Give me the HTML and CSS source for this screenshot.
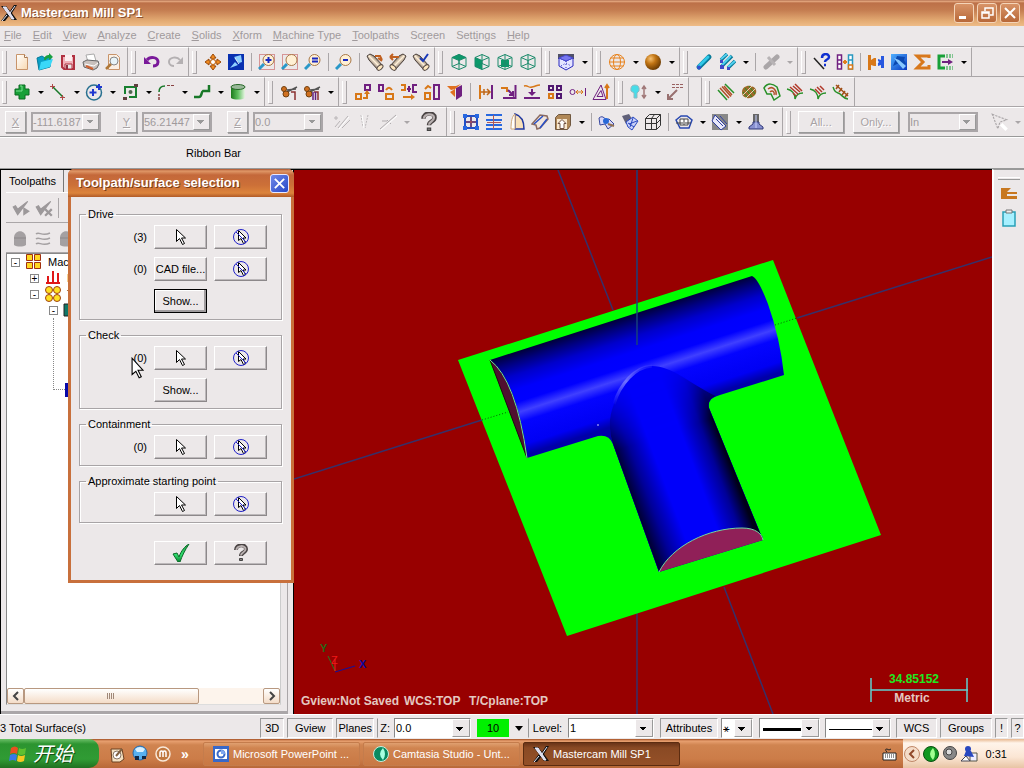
FILE: index.html
```html
<!DOCTYPE html>
<html lang="en">
<head>
    <meta charset="UTF-8">
    <meta name="viewport" content="width=device-width, initial-scale=1.0">
    <title>Mastercam Mill SP1</title>
    <link rel="stylesheet" href="styles.css">
</head>
<body>
    <!-- Icon set -->
    <svg class="sprite" aria-hidden="true">
        <defs>
            <linearGradient id="gCyl"><stop offset="0" stop-color="#1c7a1c"/><stop offset=".5" stop-color="#5fc05f"/><stop offset="1" stop-color="#e8f4e4"/></linearGradient>
            <radialGradient id="gBall" cx=".35" cy=".3" r=".8"><stop offset="0" stop-color="#f6c070"/><stop offset=".4" stop-color="#c07414"/><stop offset="1" stop-color="#5a3000"/></radialGradient>
            <linearGradient id="gCheck" x2="0" y2="1"><stop offset="0" stop-color="#2a9a4a"/><stop offset=".6" stop-color="#30e070"/><stop offset="1" stop-color="#0a8030"/></linearGradient>
            <linearGradient id="gTube" x1="0" y1="1" x2="1" y2="0"><stop offset=".3" stop-color="#6a5a50"/><stop offset=".5" stop-color="#fff0d8"/><stop offset=".7" stop-color="#6a5a4a"/></linearGradient>
            <linearGradient id="gSheet" x2="1" y2="1"><stop offset="0" stop-color="#fff"/><stop offset="1" stop-color="#f8d8b0"/></linearGradient>
            <linearGradient id="gBlue" x2="1" y2="1"><stop offset="0" stop-color="#50b0ff"/><stop offset="1" stop-color="#0838c0"/></linearGradient>
        </defs>
        <symbol id="logo" viewBox="0 0 18 18"><path d="M1 2h5l4 5 4-6h3l-5 8 5 7h-5l-3-4-4 5H1l6-8z" fill="#111"/><path d="M3 3h3l8 12h-2zM15 2l-5 7M7 11l-5 6" stroke="#eef" fill="#dde"/></symbol>
        <symbol id="new" viewBox="0 0 18 18"><path d="M3.500 1.500h8l3 3v12h-11z" fill="url(#gSheet)" stroke="#c8946a"/><path d="M11.500 1.500v3h3" fill="#fff" stroke="#a87850"/></symbol>
        <symbol id="open" viewBox="0 0 18 18"><path d="M1 5l5-2 3 2 6-1-1 10-11 3z" fill="#0aa0c8" stroke="#067a98"/><path d="M5 9l12-3-3 8-11 3z" fill="#3ad8f8"/><path d="M8 7c0-4 3-5 5-5V0l4 4-4 3V5c-2 0-3 1-3 2z" fill="#18a040"/></symbol>
        <symbol id="save" viewBox="0 0 18 18"><path d="M3 3h12v13H5l-2-2z" fill="#f0b0b8" stroke="#b03040" stroke-width="2"/><path d="M6 2h7v6H6z" fill="#fbeff0"/><path d="M6 11h7v5H6z" fill="#e8e8e8" stroke="#b03040"/><path d="M7 12h2v4H7z" fill="#903040"/></symbol>
        <symbol id="print" viewBox="0 0 18 18"><path d="M4 2l8-1 2 7-8 1z" fill="#fff" stroke="#aaa"/><path d="M1 9l4-2 11 1 1 3-2 4-4 2-9-3z" fill="#c8c0bc" stroke="#666"/><path d="M3 11l9 2 4-3" fill="none" stroke="#fff"/><path d="M4 13l7 3" stroke="#d06030" stroke-width="2"/></symbol>
        <symbol id="preview" viewBox="0 0 18 18"><path d="M3.500 1.500h8l3 3v12h-11z" fill="#fbf0e4" stroke="#c8946a"/><circle cx="9" cy="8" r="4" fill="#e8f4f8" stroke="#888"/><path d="M6 11l-5 5" stroke="#b07838" stroke-width="2.500"/></symbol>
        <symbol id="undo" viewBox="0 0 18 18"><path d="M4 7c3-4 11-3 11 2 0 3-3 4-5 4" fill="none" stroke="#7a1a9a" stroke-width="3"/><path d="M1 4v7h7z" fill="#7a1a9a"/></symbol>
        <symbol id="redo" viewBox="0 0 18 18"><path d="M14 7C11 3 3 4 3 9c0 3 3 4 5 4" fill="none" stroke="#b4b0b2" stroke-width="2"/><path d="M17 4v7h-7z" fill="#b4b0b2"/></symbol>
        <symbol id="fit" viewBox="0 0 18 18"><path d="M9 1l3 4h-2v3h3V6l4 3-4 3v-2h-3v3h2l-3 4-3-4h2v-3H5v2L1 9l4-3v2h3V5H6z" fill="#f08a20" stroke="#9a4a08"/><circle cx="9" cy="9" r="2.500" fill="#fff" stroke="#c86810"/></symbol>
        <symbol id="repaint" viewBox="0 0 18 18"><path d="M1 1h16v16H1z" fill="#0830b0"/><path d="M7 4l7-2 1 7-3 1zM3 15l5-6 3 3z" fill="#8cd0ff"/><path d="M8 5l4 6" stroke="#e8f8ff"/></symbol>
        <symbol id="glass" viewBox="0 0 18 18"><path d="M6 11l-5 5" stroke="#2a98c8" stroke-width="3"/><circle cx="10.500" cy="7" r="5.500" fill="#fff0d4" stroke="#a87848"/></symbol>
        <symbol id="zoomwin" viewBox="0 0 18 18"><path d="M1.500 1.500h15v15h-15z" fill="none" stroke="#c04040" stroke-dasharray="1 1"/><use href="#glass"/><path d="M10.500 4v6M7.500 7h6" stroke="#1828c0" stroke-width="2"/></symbol>
        <symbol id="zoomtgt" viewBox="0 0 18 18"><path d="M1.500 1.500h15v15h-15z" fill="none" stroke="#c04040" stroke-dasharray="1 1"/><use href="#glass"/></symbol>
        <symbol id="zoomeq" viewBox="0 0 18 18"><use href="#glass"/><path d="M8 5.500h6M8 8.500h6" stroke="#1828c0" stroke-width="2"/></symbol>
        <symbol id="zoomout" viewBox="0 0 18 18"><use href="#glass"/><path d="M8 7h5" stroke="#1828c0" stroke-width="2"/></symbol>
        <symbol id="tube" viewBox="0 0 18 18"><path d="M1 3l3-2 4 2 9 10-5 4L3 7z" fill="url(#gTube)" stroke="#4a403a"/><ellipse cx="14" cy="14.500" rx="2" ry="3.500" transform="rotate(50 14 14.500)" fill="#ffe8c0" stroke="#554a44"/></symbol>
        <symbol id="view1" viewBox="0 0 18 18"><use href="#tube"/><path d="M9 3h5l2 4M12 5l4 3" stroke="#c06020" stroke-width="2" fill="none"/></symbol>
        <symbol id="view2" viewBox="0 0 18 18"><use href="#tube" transform="matrix(-1 0 0 1 18 0)"/><path d="M1 4h9M1 4l3-3M1 4l3 3" stroke="#c06020" stroke-width="2" fill="none"/></symbol>
        <symbol id="view3" viewBox="0 0 18 18"><use href="#tube"/><path d="M8 5l3 3 5-7" stroke="#1838b8" stroke-width="2" fill="none"/></symbol>
        <symbol id="cube" viewBox="0 0 18 18"><path d="M9 1.500l7 3v9l-7 3-7-3v-9zM2 4.500l7 3 7-3M9 7.500v9M9 1.500v9M2 13.500l7-3 7 3" fill="none" stroke="#1a8a6a"/></symbol>
        <symbol id="cubetop" viewBox="0 0 18 18"><path d="M9 1l7 3.500-7 3-7-3z" fill="#0a9a6a"/><use href="#cube"/></symbol>
        <symbol id="cubefront" viewBox="0 0 18 18"><path d="M2 4.500l7 3v9l-7-3z" fill="#0a9a6a"/><use href="#cube"/></symbol>
        <symbol id="cuberight" viewBox="0 0 18 18"><path d="M5 7h8v7H5z" fill="#0a9a6a"/><use href="#cube"/></symbol>
        <symbol id="gview" viewBox="0 0 18 18"><path d="M1 1h16v5H1z" fill="#505068"/><path d="M2 5l7 3 7-3v8l-7 4-7-4z" fill="#e4e4ff" stroke="#2828c0"/><path d="M9 2l7 3-7 3-7-3z" fill="#7878f0" stroke="#4848d0"/><path d="M9 8v9M4 13l5-3 5 3" stroke="#2828c0" stroke-dasharray="1 2" fill="none"/></symbol>
        <symbol id="globe" viewBox="0 0 18 18"><g fill="none" stroke="#e8821c"><circle cx="9" cy="9" r="7.500"/><ellipse cx="9" cy="9" rx="3.500" ry="7.500"/><path d="M1 9h16M2.500 5h13M2.500 13h13"/></g></symbol>
        <symbol id="ball" viewBox="0 0 18 18"><circle cx="9" cy="9" r="8" fill="url(#gBall)"/></symbol>
        <symbol id="rod" viewBox="0 0 18 18"><path d="M4 14L14 4" stroke="#087a98" stroke-width="5" stroke-linecap="round"/><path d="M4 13L13 4" stroke="#30c8e8" stroke-width="3" stroke-linecap="round"/><circle cx="4" cy="14.500" r="2" fill="#3050d0"/></symbol>
        <symbol id="rods" viewBox="0 0 18 18"><path d="M3 7l6-6M4 13L14 3M10 15l7-7" stroke="#087a98" stroke-width="3.500"/><path d="M3 6l6-5M4 12L13 3M10 14l7-6" stroke="#50d0f0" stroke-width="2"/><path d="M2 7h3v3H2zM2 12h4v4H2zM9 14h3v3H9z" fill="#4048c8"/></symbol>
        <symbol id="rodoff" viewBox="0 0 18 18"><path d="M4 14L15 4" stroke="#aaa6a8" stroke-width="5" stroke-linecap="round"/><path d="M6 4l7 8" stroke="#b8b4b6" stroke-width="3"/></symbol>
        <symbol id="whatline" viewBox="0 0 18 18"><path d="M1 5l10 11" stroke="#222" stroke-width="1.500"/><path d="M9 5c0-5 7-5 7-1 0 3-4 2-4 5M11 12h2" stroke="#1030d0" stroke-width="2.500" fill="none"/></symbol>
        <symbol id="compare" viewBox="0 0 18 18"><path d="M1.500 2h4v14h-4zM1 7h5M1 11h5" fill="#fff" stroke="#702080" stroke-width="1.500"/><path d="M12.500 2h4v14h-4zM12 7h5" fill="#fff" stroke="#2898c0" stroke-width="1.500"/><path d="M12.500 12h4v4h-4z" fill="#fff" stroke="#d87818" stroke-width="1.500"/><path d="M7 9h4M9 7v4" stroke="#e08020" stroke-width="2"/></symbol>
        <symbol id="links" viewBox="0 0 18 18"><path d="M1 2h3v5l3-2h2v8H7l-3-1v5H1z" fill="#d87818"/><path d="M17 3h-3v4l-3-1v7l3-1v3h3z" fill="#2858e0"/><path d="M9 9h3" stroke="#fff"/></symbol>
        <symbol id="bluetool" viewBox="0 0 18 18"><path d="M1 1h16v16H1z" fill="url(#gBlue)"/><path d="M7 3l8 1-1 3 2 4-4 1-3-2-6 3z" fill="#0a48b0"/><path d="M4 5l5 2 7 6-3 3-6-7z" fill="#88c8ff"/></symbol>
        <symbol id="sigma" viewBox="0 0 18 18"><path d="M16 5V3H4l6 6-6 6h12v-3" fill="none" stroke="#d8781c" stroke-width="3"/></symbol>
        <symbol id="exit" viewBox="0 0 18 18"><path d="M9 3H3v12h6" fill="none" stroke="#18a038" stroke-width="3"/><path d="M6 8h6V6l5 3-5 3v-2H6z" fill="#702080"/><path d="M10 2h7M10 4h7M10 14h7M10 16h7" stroke="#18a038" stroke-dasharray="2 1"/></symbol>
        <symbol id="plus" viewBox="0 0 18 18"><path d="M6 2h6v4h4v6h-4v4H6v-4H2V6h4z" fill="#18a038" stroke="#0a6a20"/><path d="M7 3h2v5H3" stroke="#7ae090" fill="none"/></symbol>
        <symbol id="line" viewBox="0 0 18 18"><path d="M4 4l10 10" stroke="#187828" stroke-width="1.500"/><path d="M1 3.500h5M3.500 1v5M11 14.500h5M13.500 12v5" stroke="#b04848"/></symbol>
        <symbol id="arc" viewBox="0 0 18 18"><circle cx="9" cy="9.500" r="7.500" fill="none" stroke="#287090" stroke-width="1.500"/><path d="M8 6v7M4.500 9.500h7M14 1v6M11 4h6" stroke="#2038d0" stroke-width="2"/></symbol>
        <symbol id="rect" viewBox="0 0 18 18"><path d="M4 11V4h11v10H8" fill="none" stroke="#188030" stroke-width="2"/><circle cx="9.500" cy="9" r="2" fill="#506850"/><path d="M2 14h4v3H2zM13 1h4v3h-4z" fill="#604040"/></symbol>
        <symbol id="fillet" viewBox="0 0 18 18"><path d="M2 17v-6" stroke="#884040" stroke-width="1.500" stroke-dasharray="3 1"/><path d="M2 9c0-4 2-6 6-6" stroke="#187828" stroke-width="1.500" fill="none"/><path d="M10 2.500h7" stroke="#884040" stroke-dasharray="3 1"/></symbol>
        <symbol id="spline" viewBox="0 0 18 18"><path d="M1 14h5c3 0 2-5 4-6h6V2" fill="none" stroke="#187828" stroke-width="2.500"/></symbol>
        <symbol id="cyl" viewBox="0 0 18 18"><path d="M2 4v11c3 2 11 2 14 0V4z" fill="url(#gCyl)"/><ellipse cx="9" cy="4" rx="7" ry="2.500" fill="#98b898" stroke="#286828"/></symbol>
        <symbol id="trim" viewBox="0 0 18 18"><path d="M7 9l10-5M7 7l9-1" stroke="#555" stroke-width="1.500"/><circle cx="4" cy="6" r="2.500" fill="#d07020" stroke="#704010"/><circle cx="6" cy="11" r="3" fill="#d07020" stroke="#704010"/><path d="M11 9h4v8" stroke="#8a3030" stroke-width="1.500" fill="none"/></symbol>
        <symbol id="trimmany" viewBox="0 0 18 18"><use href="#trim"/><path d="M10 9v8M12.500 9v8" stroke="#602080" stroke-width="1.500"/></symbol>
        <symbol id="xf1" viewBox="0 0 18 18"><path d="M11 2h5v5h-5z" fill="none" stroke="#702080" stroke-width="2"/><path d="M2 11h5v5H2zM9 15h4v-5" fill="none" stroke="#d87818" stroke-width="2"/><path d="M10 11l3-4 3 4z" fill="#d87818"/></symbol>
        <symbol id="xf2" viewBox="0 0 18 18"><path d="M2 2h4v6H2z" fill="none" stroke="#702080" stroke-width="2"/><path d="M9 16v-5h7v5zM9 7c2-3 4-3 6 0" fill="none" stroke="#d87818" stroke-width="2"/></symbol>
        <symbol id="xf3" viewBox="0 0 18 18"><path d="M1 2h4v5H1M3 14h9" fill="none" stroke="#d87818" stroke-width="2"/><path d="M11 11l4 3-4 3z" fill="#d87818"/><path d="M17 2h-4v7h4M7 6h4M9 3v6" fill="none" stroke="#702080" stroke-width="2"/></symbol>
        <symbol id="xf4" viewBox="0 0 18 18"><path d="M11 2h5v14h-5z" fill="none" stroke="#702080" stroke-width="2"/><path d="M2 10h5v6H2zM2 6l3-3 3 2" fill="none" stroke="#d87818" stroke-width="2"/></symbol>
        <symbol id="xf5" viewBox="0 0 18 18"><path d="M10 5l6-3v11l-6 4z" fill="#702080"/><path d="M1 3h9l5-2-6 5-4 1zM4 9l5 5V6z" fill="#e07020"/></symbol>
        <symbol id="xf6" viewBox="0 0 18 18"><path d="M3 2v14" stroke="#d87818" stroke-width="2"/><path d="M4 9h9M10 6l3 3-3 3M7 6v6" stroke="#c06818" stroke-width="1.500" fill="none"/><path d="M15 2v14" stroke="#702080" stroke-width="2"/></symbol>
        <symbol id="xf7" viewBox="0 0 18 18"><path d="M1 5h6v4" stroke="#d87818" stroke-width="2" fill="none"/><path d="M15.500 2v13H3M8 7l5 5V8M9 12h4" stroke="#702080" stroke-width="2" fill="none"/></symbol>
        <symbol id="xf8" viewBox="0 0 18 18"><path d="M1 3c5-1 3 2 8 1s4-2 8-2" stroke="#d87818" stroke-width="1.500" fill="none"/><path d="M1 15h16M9 6v5" stroke="#702080" stroke-width="2"/><path d="M5 9h8l-4 4z" fill="#702080"/></symbol>
        <symbol id="xf9" viewBox="0 0 18 18"><path d="M3 3h4v4H3zM11 3h4v4h-4zM11 11h4v4h-4z" fill="none" stroke="#501870" stroke-width="2"/><path d="M3 11h4v4H3z" fill="none" stroke="#d87818" stroke-width="2"/></symbol>
        <symbol id="xf10" viewBox="0 0 18 18"><circle cx="3.500" cy="9" r="2.500" fill="none" stroke="#702080"/><path d="M7 9h7M9 7L7 9l2 2M12 7l2 2-2 2" stroke="#d87818" fill="none"/><path d="M16.500 5v8" stroke="#702080"/></symbol>
        <symbol id="xf11" viewBox="0 0 18 18"><path d="M1 16.500L9 2l5 14.500zM5 13.500l4-6 2 6z" fill="none" stroke="#702080"/><path d="M15 3v13M13 5l2-3 2 3" stroke="#d87818" stroke-width="2" fill="none"/></symbol>
        <symbol id="dimup" viewBox="0 0 18 18"><path d="M5 2q5 0 4 6l-2 2v5H4v-5L1 8q-1-6 4-6z" fill="#48dce8" stroke="#90b8c0"/><path d="M14 4v10M12 6l2-3 2 3M12 12l2 3 2-3" stroke="#a07878" stroke-width="1.500" fill="none"/></symbol>
        <symbol id="note" viewBox="0 0 18 18"><path d="M2 16L11 7M2 11v5h5" stroke="#987070" stroke-width="2" fill="none"/><path d="M6 1.500h11M6 4.500h11" stroke="#986060" stroke-dasharray="3 1"/></symbol>
        <symbol id="tp1" viewBox="0 0 18 18"><path d="M1 7l9 10M8 1l9 9" stroke="#289028" stroke-width="1.500"/><path d="M3 5l9 10M5 3.500l9 10M7 3l8 9" stroke="#b05028" stroke-width="1.500"/></symbol>
        <symbol id="tp2" viewBox="0 0 18 18"><path d="M2 9c0-5 5-7 9-6s6 4 5 7-5 6-9 5-5-3-5-6z" fill="#9a6a28"/><path d="M3 9l4 5M5 5l7 9M9 3l6 8" stroke="#289028"/><path d="M3 12l9-9M6 15l9-9" stroke="#e8d0b8"/></symbol>
        <symbol id="tp3" viewBox="0 0 18 18"><path d="M1 5c4-6 9-4 13-1l3 9-6 4-3-6-4 0z" fill="none" stroke="#289028" stroke-width="1.500"/><path d="M5 6c5-4 9 2 8 6M7 9c3-3 5 1 4 3" fill="none" stroke="#b05028" stroke-width="1.500"/></symbol>
        <symbol id="tp4" viewBox="0 0 18 18"><path d="M1 6c5 1 8 5 8 10 1-4 4-6 8-6" fill="none" stroke="#289028" stroke-width="1.500"/><path d="M4 4l8 7M7 3l7 6M9 1l7 7M7 10l3 3" stroke="#b03828" stroke-width="1.500"/></symbol>
        <symbol id="tp5" viewBox="0 0 18 18"><path d="M1 6c5 1 8 5 8 10 1-4 4-6 8-6" fill="none" stroke="#289028" stroke-width="1.500"/><path d="M6 6l5 5M8 4l5 5M11 3l4 4" stroke="#b03828" stroke-width="1.500"/></symbol>
        <symbol id="tp6" viewBox="0 0 18 18"><path d="M1 4c2 4 1 5 5 6s5 6 10 6" fill="none" stroke="#289028" stroke-width="1.500"/><path d="M4 2l12 11M4 6l3-4M7 9l3-4M10 12l3-4M13 14l3-4" stroke="#a05018" stroke-width="1.500"/></symbol>
        <symbol id="off1" viewBox="0 0 18 18"><path d="M1 5h4M3 3v4M5 15L15 3M9 15l8-8M2 14l5-6" stroke="#b8b4b6"/><path d="M6 16L16 4" stroke="#fff"/></symbol>
        <symbol id="off2" viewBox="0 0 18 18"><path d="M5 2l2 12M12 2L9 15" stroke="#bbb7b9" stroke-dasharray="2 1"/><path d="M6 2l2 13" stroke="#fff"/></symbol>
        <symbol id="off3" viewBox="0 0 18 18"><path d="M1 16L17 2M8 7l4 4M3 8h5" stroke="#b0acae"/><path d="M2 17L18 3" stroke="#fff"/></symbol>
        <symbol id="ask" viewBox="0 0 18 18"><path d="M4 6C4 0 14 0 14 5c0 4-5 3-5 7" fill="none" stroke="#4a4444" stroke-width="4"/><path d="M4.500 6C4 1 13.500 1 13.500 5c0 4-4.500 3-4.500 6.500" fill="none" stroke="#b8b0b0" stroke-width="2"/><path d="M7.500 14.500h3v2h-3z" fill="#8a8484" stroke="#444"/></symbol>
        <symbol id="grid" viewBox="0 0 18 18"><path d="M3 3h12v12H3zM9 3v12M3 9h12" fill="none" stroke="#2050c8" stroke-width="2"/><path d="M9 4v10M4 9h10" stroke="#c04838"/><path d="M1 1h4v4H1zM13 1h4v4h-4zM1 13h4v4H1zM13 13h4v4h-4z" fill="#2868e0"/></symbol>
        <symbol id="flow" viewBox="0 0 18 18"><path d="M1 2h16M1 7h16M1 12h16M1 16h16" stroke="#2868e0" stroke-width="2"/><path d="M2 9.500h14" stroke="#b05858"/><path d="M8.500 2v14" stroke="#b05858"/></symbol>
        <symbol id="rev" viewBox="0 0 18 18"><path d="M7 1c7 2 9 9 9 15H7z" fill="#f8e0b8" stroke="#2038a0" stroke-width="1.500"/><path d="M7 1v15H3C3 9 4 3 7 1z" fill="#fff" stroke="#d0a878"/></symbol>
        <symbol id="sweep" viewBox="0 0 18 18"><path d="M1 11L9 2l7 1 1 3-8 9-3 1-1-4z" fill="#f0e4dc" stroke="#8a6a60" stroke-width="1.500"/><path d="M3 11l9-8M9 15l7-9" stroke="#2850c8" stroke-width="1.500"/></symbol>
        <symbol id="box" viewBox="0 0 18 18"><path d="M1.500 4.500l3-3h12v11l-3 4h-12z" fill="#b08858" stroke="#705840"/><path d="M3 6h10v10H3z" fill="#f8e8d0"/><path d="M8 6.500l4 4h-2v5H6v-5H4z" fill="#fff" stroke="#705040"/></symbol>
        <symbol id="surf1" viewBox="0 0 18 18"><path d="M1 5c5-4 5 3 10 1l5 5-6 5-3-5-5 1z" fill="#d8d8f8" stroke="#3848a0"/><circle cx="8" cy="8" r="3" fill="#2868d8"/><path d="M10 11l6 2" stroke="#907050" stroke-width="2"/></symbol>
        <symbol id="surf2" viewBox="0 0 18 18"><path d="M1 3l7-2 3 5-6 5z" fill="#606078"/><path d="M5 9l7-5 5 4-6 9-4-3z" fill="#c8d0f8" stroke="#2848c0"/><path d="M7 10l6 4M12 5l-3 9M16 8l-8 3" stroke="#2848c0"/></symbol>
        <symbol id="wire" viewBox="0 0 18 18"><path d="M1.500 5.500l4-4h11v11l-4 4h-11zM1.500 5.500h11v11M12.500 5.500l4-4M7.500 5v11M1.500 10.500h11l4-4M7.500 5.500l3-4" fill="none" stroke="#333"/></symbol>
        <symbol id="planes" viewBox="0 0 18 18"><path d="M1 7l5-4h6l5 4-3 8H5z" fill="none" stroke="#2848b0" stroke-width="1.500"/><path d="M5 6h8v6H5zM9 6v6M1 10h7M10 10h6" fill="#fff" stroke="#444"/></symbol>
        <symbol id="hatch" viewBox="0 0 18 18"><path d="M1 1h16v16H1z" fill="#888"/><path d="M4 2l11 11-5 4L1 8z" fill="#e8e8f8" stroke="#3040a0"/><path d="M5 6l7 7M9 3l7 8" stroke="#3040a0"/></symbol>
        <symbol id="mill" viewBox="0 0 18 18"><path d="M6 1h6v8H6z" fill="#666"/><path d="M6 9h6v2l4 3v2H2v-2l4-3z" fill="#8890d0" stroke="#303878"/><path d="M9 2v13" stroke="#c8d0ff"/></symbol>
        <symbol id="offcursor" viewBox="0 0 18 18"><path d="M2 2l13 5-6 2-2 6z" fill="none" stroke="#aaa6a8" stroke-dasharray="2 1"/><path d="M10 11l5 5" stroke="#fff" stroke-width="3"/></symbol>
        <symbol id="chk1" viewBox="0 0 18 18"><path d="M2 8l4 7L15 3l-9 7-2-3z" fill="#9c989a" stroke="#9c989a"/><path d="M11 8l6 4-6 4z" fill="#9c989a"/></symbol>
        <symbol id="chk2" viewBox="0 0 18 18"><path d="M2 8l4 7L15 3l-9 7-2-3z" fill="#9c989a" stroke="#9c989a"/><path d="M10 10l6 6M16 10l-6 6" stroke="#9c989a" stroke-width="2"/></symbol>
        <symbol id="lock" viewBox="0 0 18 18"><path d="M3 9c0-9 12-9 12 0v7c-3 2-9 2-12 0z" fill="#a4a0a2"/><path d="M3 9h12" stroke="#8c888a"/></symbol>
        <symbol id="waves" viewBox="0 0 18 18"><path d="M2 5c3-3 6 3 14-1M2 10c3-3 6 3 14-1M2 15c3-3 6 3 14-1" fill="none" stroke="#a4a0a2" stroke-width="1.500"/></symbol>
        <symbol id="arrow" viewBox="0 0 12 18"><path d="M1.500 1.500v12l3-3 3 6 2-1-3-5.500h4z" fill="#fff" stroke="#000"/></symbol>
        <symbol id="noarrow" viewBox="0 0 18 18"><path d="M6.500 2.500v10l2.500-2 2.500 5 2-1-2.500-4.500h3z" fill="#fff" stroke="#000"/><circle cx="9" cy="9" r="7.500" fill="none" stroke="#2020c8"/><path d="M4 4l10 10" stroke="#2020c8"/></symbol>
        <symbol id="tick" viewBox="0 0 18 18"><path d="M1 10l4-1 2 4C9 7 13 2 17 0 13 6 10 12 8 18H6z" fill="url(#gCheck)" stroke="#0a6a28"/></symbol>
    </svg>

    <header class="titlebar">
        <svg class="ico"><use href="#logo"/></svg>
        <h1>Mastercam Mill SP1</h1>
        <button class="winbtn" aria-label="Minimize"><svg viewBox="0 0 14 14"><path d="M2 10h7v3H2z" fill="#fff"/></svg></button>
        <button class="winbtn" aria-label="Restore"><svg viewBox="0 0 14 14"><path d="M5 5V2h8v7h-3M2 6h7v6H2zM2 7h7" fill="none" stroke="#fff" stroke-width="1.500"/></svg></button>
        <button class="winbtn" aria-label="Close"><svg viewBox="0 0 14 14"><path d="M2 2l10 10M12 2L2 12" stroke="#fff" stroke-width="2"/></svg></button>
    </header>

    <nav class="menu">
        <a href="#"><u>F</u>ile</a>
        <a href="#"><u>E</u>dit</a>
        <a href="#"><u>V</u>iew</a>
        <a href="#"><u>A</u>nalyze</a>
        <a href="#"><u>C</u>reate</a>
        <a href="#"><u>S</u>olids</a>
        <a href="#"><u>X</u>form</a>
        <a href="#"><u>M</u>achine Type</a>
        <a href="#"><u>T</u>oolpaths</a>
        <a href="#">Sc<u>r</u>een</a>
        <a href="#">Sett<u>i</u>ngs</a>
        <a href="#"><u>H</u>elp</a>
    </nav>

    <div class="bars">
        <div class="toolbar">
            <button class="tool" aria-label="New"><svg class="ico"><use href="#new"/></svg></button>
            <button class="tool" aria-label="Open"><svg class="ico"><use href="#open"/></svg></button>
            <button class="tool" aria-label="Save"><svg class="ico"><use href="#save"/></svg></button>
            <button class="tool" aria-label="Print"><svg class="ico"><use href="#print"/></svg></button>
            <button class="tool" aria-label="Print preview"><svg class="ico"><use href="#preview"/></svg></button>
        </div>
        <div class="toolbar">
            <button class="tool" aria-label="Undo"><svg class="ico"><use href="#undo"/></svg></button>
            <button class="tool" aria-label="Redo"><svg class="ico"><use href="#redo"/></svg></button>
        </div>
        <div class="toolbar">
            <button class="tool" aria-label="Fit"><svg class="ico"><use href="#fit"/></svg></button>
            <button class="tool" aria-label="Repaint"><svg class="ico"><use href="#repaint"/></svg></button>
            <span class="sep"></span>
            <button class="tool" aria-label="Zoom window"><svg class="ico"><use href="#zoomwin"/></svg></button>
            <button class="tool" aria-label="Zoom target"><svg class="ico"><use href="#zoomtgt"/></svg></button>
            <button class="tool" aria-label="Zoom previous"><svg class="ico"><use href="#zoomeq"/></svg></button>
            <span class="sep"></span>
            <button class="tool" aria-label="Zoom out"><svg class="ico"><use href="#zoomout"/></svg></button>
            <span class="sep"></span>
            <button class="tool" aria-label="Dynamic rotate"><svg class="ico"><use href="#view1"/></svg></button>
            <button class="tool" aria-label="Previous view"><svg class="ico"><use href="#view2"/></svg></button>
            <button class="tool" aria-label="Named view"><svg class="ico"><use href="#view3"/></svg></button>
        </div>
        <div class="toolbar">
            <button class="tool" aria-label="Top"><svg class="ico"><use href="#cubetop"/></svg></button>
            <button class="tool" aria-label="Front"><svg class="ico"><use href="#cubefront"/></svg></button>
            <button class="tool" aria-label="Right"><svg class="ico"><use href="#cuberight"/></svg></button>
            <button class="tool" aria-label="Isometric"><svg class="ico"><use href="#cube"/></svg></button>
        </div>
        <div class="toolbar">
            <button class="tool" aria-label="Planes"><svg class="ico"><use href="#gview"/></svg></button>
            <button class="drop" aria-label="More planes"></button>
        </div>
        <div class="toolbar">
            <button class="tool" aria-label="Wireframe"><svg class="ico"><use href="#globe"/></svg></button>
            <button class="drop" aria-label="More wireframe"></button>
            <button class="tool" aria-label="Shaded"><svg class="ico"><use href="#ball"/></svg></button>
            <button class="drop" aria-label="More shading"></button>
        </div>
        <div class="toolbar">
            <button class="tool" aria-label="Delete"><svg class="ico"><use href="#rod"/></svg></button>
            <button class="tool" aria-label="Delete duplicates"><svg class="ico"><use href="#rods"/></svg></button>
            <button class="drop" aria-label="More delete"></button>
            <span class="sep"></span>
            <button class="tool" disabled aria-label="Undelete"><svg class="ico"><use href="#rodoff"/></svg></button>
            <button class="drop" disabled aria-label="More undelete"></button>
        </div>
        <div class="toolbar">
            <button class="tool" aria-label="Analyze entity"><svg class="ico"><use href="#whatline"/></svg></button>
            <button class="tool" aria-label="Compare"><svg class="ico"><use href="#compare"/></svg></button>
            <span class="sep"></span>
            <button class="tool" aria-label="Connect"><svg class="ico"><use href="#links"/></svg></button>
            <button class="tool" aria-label="Configure"><svg class="ico"><use href="#bluetool"/></svg></button>
            <button class="tool" aria-label="Sum"><svg class="ico"><use href="#sigma"/></svg></button>
            <button class="tool" aria-label="Run add-in"><svg class="ico"><use href="#exit"/></svg></button>
            <button class="drop" aria-label="More add-ins"></button>
        </div>
    </div>

    <div class="bars">
        <div class="toolbar">
            <button class="tool" aria-label="Point"><svg class="ico"><use href="#plus"/></svg></button>
            <button class="drop" aria-label="More points"></button>
            <button class="tool" aria-label="Line"><svg class="ico"><use href="#line"/></svg></button>
            <button class="drop" aria-label="More lines"></button>
            <button class="tool" aria-label="Arc"><svg class="ico"><use href="#arc"/></svg></button>
            <button class="drop" aria-label="More arcs"></button>
            <button class="tool" aria-label="Rectangle"><svg class="ico"><use href="#rect"/></svg></button>
            <button class="drop" aria-label="More shapes"></button>
            <button class="tool" aria-label="Fillet"><svg class="ico"><use href="#fillet"/></svg></button>
            <button class="drop" aria-label="More fillets"></button>
            <button class="tool" aria-label="Spline"><svg class="ico"><use href="#spline"/></svg></button>
            <button class="drop" aria-label="More splines"></button>
            <button class="tool" aria-label="Cylinder"><svg class="ico"><use href="#cyl"/></svg></button>
            <button class="drop" aria-label="More primitives"></button>
        </div>
        <div class="toolbar">
            <button class="tool" aria-label="Trim"><svg class="ico"><use href="#trim"/></svg></button>
            <button class="tool" aria-label="Trim many"><svg class="ico"><use href="#trimmany"/></svg></button>
            <button class="drop" aria-label="More trim"></button>
        </div>
        <div class="toolbar">
            <button class="tool" aria-label="Translate"><svg class="ico"><use href="#xf1"/></svg></button>
            <button class="tool" aria-label="Rotate"><svg class="ico"><use href="#xf2"/></svg></button>
            <button class="tool" aria-label="Mirror"><svg class="ico"><use href="#xf3"/></svg></button>
            <button class="tool" aria-label="Scale"><svg class="ico"><use href="#xf4"/></svg></button>
            <button class="tool" aria-label="Translate 3D"><svg class="ico"><use href="#xf5"/></svg></button>
            <span class="sep"></span>
            <button class="tool" aria-label="Offset"><svg class="ico"><use href="#xf6"/></svg></button>
            <button class="tool" aria-label="Offset contour"><svg class="ico"><use href="#xf7"/></svg></button>
            <button class="tool" aria-label="Project"><svg class="ico"><use href="#xf8"/></svg></button>
            <button class="tool" aria-label="Array"><svg class="ico"><use href="#xf9"/></svg></button>
            <button class="tool" aria-label="Drag"><svg class="ico"><use href="#xf10"/></svg></button>
            <button class="tool" aria-label="Stretch"><svg class="ico"><use href="#xf11"/></svg></button>
        </div>
        <div class="toolbar">
            <button class="tool" aria-label="Dimension"><svg class="ico"><use href="#dimup"/></svg></button>
            <button class="drop" aria-label="More dimensions"></button>
            <button class="tool" aria-label="Note"><svg class="ico"><use href="#note"/></svg></button>
        </div>
        <div class="toolbar spaced">
            <button class="tool" aria-label="Rough parallel"><svg class="ico"><use href="#tp1"/></svg></button>
            <button class="tool" aria-label="Rough radial"><svg class="ico"><use href="#tp2"/></svg></button>
            <button class="tool" aria-label="Contour"><svg class="ico"><use href="#tp3"/></svg></button>
            <button class="tool" aria-label="Finish parallel"><svg class="ico"><use href="#tp4"/></svg></button>
            <button class="tool" aria-label="Finish leftover"><svg class="ico"><use href="#tp5"/></svg></button>
            <button class="tool" aria-label="Finish pencil"><svg class="ico"><use href="#tp6"/></svg></button>
        </div>
    </div>

    <div class="bars">
        <div class="toolbar coords">
            <button class="axis" disabled><u>X</u></button>
            <span class="combo off"><select disabled aria-label="X value"><option>-111.6187</option></select></span>
            <button class="axis" disabled><u>Y</u></button>
            <span class="combo off"><select disabled aria-label="Y value"><option>56.21447</option></select></span>
            <button class="axis" disabled><u>Z</u></button>
            <span class="combo off"><select disabled aria-label="Z value"><option>0.0</option></select></span>
            <button class="tool" disabled aria-label="Fast point"><svg class="ico"><use href="#off1"/></svg></button>
            <button class="tool" disabled aria-label="AutoCursor"><svg class="ico"><use href="#off2"/></svg></button>
            <button class="tool" disabled aria-label="Override"><svg class="ico"><use href="#off3"/></svg></button>
            <button class="drop" disabled aria-label="More overrides"></button>
            <button class="tool help" aria-label="Help"><svg class="ico big"><use href="#ask"/></svg></button>
        </div>
        <div class="toolbar">
            <button class="tool" aria-label="Net surface"><svg class="ico"><use href="#grid"/></svg></button>
            <button class="tool" aria-label="Ruled surface"><svg class="ico"><use href="#flow"/></svg></button>
            <button class="tool" aria-label="Revolved surface"><svg class="ico"><use href="#rev"/></svg></button>
            <button class="tool" aria-label="Swept surface"><svg class="ico"><use href="#sweep"/></svg></button>
            <button class="tool" aria-label="Extruded surface"><svg class="ico"><use href="#box"/></svg></button>
            <button class="drop" aria-label="More surfaces"></button>
            <span class="sep"></span>
            <button class="tool" aria-label="Trim surface"><svg class="ico"><use href="#surf1"/></svg></button>
            <button class="tool" aria-label="Blend surface"><svg class="ico"><use href="#surf2"/></svg></button>
            <button class="tool" aria-label="Bounding box"><svg class="ico"><use href="#wire"/></svg></button>
            <span class="sep"></span>
            <button class="tool" aria-label="WCS"><svg class="ico"><use href="#planes"/></svg></button>
            <button class="drop" aria-label="More WCS"></button>
            <button class="tool" aria-label="Material"><svg class="ico"><use href="#hatch"/></svg></button>
            <button class="drop" aria-label="More material"></button>
            <button class="tool" aria-label="Machine"><svg class="ico"><use href="#mill"/></svg></button>
            <button class="drop" aria-label="More machines"></button>
        </div>
        <div class="toolbar select">
            <button class="filter" disabled>All...</button>
            <button class="filter" disabled>Only...</button>
            <span class="combo off"><select disabled aria-label="Selection mode"><option>In</option></select></span>
            <button class="tool" disabled aria-label="Select"><svg class="ico big"><use href="#offcursor"/></svg></button>
            <button class="drop" disabled aria-label="More selection"></button>
        </div>
    </div>

    <div class="ribbon">Ribbon Bar</div>

    <main class="work">
        <aside class="panel">
            <div class="tabs"><button class="tab">Toolpaths</button></div>
            <div class="ptools">
                <button class="tool" disabled aria-label="Select all operations"><svg class="ico big"><use href="#chk1"/></svg></button>
                <button class="tool" disabled aria-label="Select dirty operations"><svg class="ico big"><use href="#chk2"/></svg></button>
                <span class="sep"></span>
            </div>
            <div class="ptools">
                <button class="tool" disabled aria-label="Lock"><svg class="ico"><use href="#lock"/></svg></button>
                <button class="tool" disabled aria-label="Toggle display"><svg class="ico"><use href="#waves"/></svg></button>
                <button class="tool" disabled aria-label="Ghost"><svg class="ico"><use href="#lock"/></svg></button>
            </div>
            <div class="treebox">
                <ul class="tree">
                    <li><span class="node">-</span><svg class="ico"><path d="M1.500 1.500h6v6h-6zM9.500 1.500h6v6h-6zM1.500 9.500h6v6h-6zM9.500 9.500h6v6h-6z" fill="#ffd820" stroke="#a03010"/></svg>Machine</li>
                    <li class="l1"><span class="node">+</span><svg class="ico"><path d="M4 7v8M9 2v13M14 4v11M2 14h14" stroke="#e01818" stroke-width="2"/></svg>Properties</li>
                    <li class="l1"><span class="node">-</span><svg class="ico"><g fill="#ffe020" stroke="#a04010"><circle cx="5" cy="5" r="3.500"/><circle cx="13" cy="5" r="3.500"/><circle cx="5" cy="13" r="3.500"/><circle cx="13" cy="13" r="3.500"/></g></svg>Toolpath</li>
                    <li class="l2"><span class="node">-</span><svg class="ico"><path d="M1 3h16v12H1z" fill="#107868" stroke="#222"/></svg></li>
                    <li class="stem"><svg class="ico"><path d="M1 4h9v14H1z" fill="#0808a8"/></svg></li>
                </ul>
                <div class="hscroll">
                    <button aria-label="Scroll left"><svg viewBox="0 0 10 10"><path d="M7 1L3 5l4 4" fill="none" stroke="#444" stroke-width="2"/></svg></button>
                    <span class="thumb"></span>
                    <button aria-label="Scroll right"><svg viewBox="0 0 10 10"><path d="M3 1l4 4-4 4" fill="none" stroke="#444" stroke-width="2"/></svg></button>
                </div>
            </div>
        </aside>

        <svg class="view" viewBox="294 170 698 544" preserveAspectRatio="xMidYMid slice">
            <defs>
                <linearGradient id="gRun" gradientUnits="userSpaceOnUse" x1="490" y1="360" x2="521" y2="456">
                    <stop offset="0" stop-color="#000038"/><stop offset=".1" stop-color="#000080"/><stop offset=".22" stop-color="#0000cc"/><stop offset=".36" stop-color="#0000fc"/><stop offset=".48" stop-color="#0000ff"/>
                    <stop offset=".58" stop-color="#4040ff"/><stop offset=".68" stop-color="#0404ff"/><stop offset=".9" stop-color="#0000f4"/><stop offset="1" stop-color="#0000a8"/>
                </linearGradient>
                <linearGradient id="gBranch" gradientUnits="userSpaceOnUse" x1="613" y1="444" x2="709" y2="408">
                    <stop offset="0" stop-color="#000038"/><stop offset=".14" stop-color="#000098"/><stop offset=".34" stop-color="#0000fa"/>
                    <stop offset=".66" stop-color="#0000fa"/><stop offset=".86" stop-color="#000098"/><stop offset="1" stop-color="#000018"/>
                </linearGradient>
                <linearGradient id="gFade" gradientUnits="userSpaceOnUse" x1="646" y1="374" x2="666" y2="434">
                    <stop offset="0" stop-color="#000"/><stop offset="1" stop-color="#fff"/>
                </linearGradient>
                <linearGradient id="gShine" gradientUnits="userSpaceOnUse" x1="613" y1="404" x2="660" y2="364">
                    <stop offset="0" stop-color="#6a6aff" stop-opacity="0"/><stop offset=".4" stop-color="#7070ff"/><stop offset="1" stop-color="#3c3cff" stop-opacity="0"/>
                </linearGradient>
                <mask id="mFade" maskUnits="userSpaceOnUse" x="590" y="350" width="200" height="240"><path d="M590 350h200v240H590z" fill="url(#gFade)"/></mask>
            </defs>
            <path d="M-600 -200h2400v1400H-600z" fill="#980000"/>
            <g stroke="#36306a" stroke-width="1.500">
                <path d="M558 170l55 140M797 318l195-61M294 479l188-59M637 612v102M724 587l49 127"/>
            </g>
            <path d="M458 360L773 260 881 535 567 636z" fill="#00ff00"/>
            <path d="M482 420l26-8M775 325l22-7" stroke="#0a5a0a" stroke-dasharray="1 2"/>
            <path d="M490 360L752 276Q758 278 768 304 780 338 784 375L720 395Q707 398 709 408L763 540 659 572 613 444Q609 434 598 436L527 458z" fill="url(#gRun)"/>
            <path d="M659 572L613 444Q606 424 614 404C622 382 636 366 652 366 672 366 690 384 716 396Q707 399 709 408L763 540Q764 530 735 528 688 532 659 572z" fill="#0000fa"/>
            <path d="M659 572L613 444Q606 424 614 404C622 382 636 366 652 366 672 366 690 384 716 396Q707 399 709 408L763 540Q764 530 735 528 688 532 659 572z" fill="url(#gBranch)" mask="url(#mFade)"/>
            <path d="M614 404C620 384 635 367 652 366" fill="none" stroke="url(#gShine)" stroke-width="3"/>
            <path d="M490 360Q516 380 527 458z" fill="#501030" stroke="#201008"/>
            <path d="M490 360Q516 380 527 458" fill="none" stroke="#70e0a0"/>
            <path d="M659 572C672 546 708 528 742 528 756 528 762 534 763 540z" fill="#902058"/>
            <path d="M659 572C672 546 708 528 742 528 756 528 762 534 763 540" fill="none" stroke="#70d8a0"/>
            <path d="M637 170v175" stroke="#18407c" stroke-width="1.500"/>
            <path d="M597 425h2" stroke="#ccf"/>
            <path d="M335 671l-7-15" stroke="#208020"/>
            <path d="M335 671v-12" stroke="#f02020"/>
            <path d="M335 672l20-6" stroke="#1010a0"/>
            <text x="320" y="652" class="axis-y">Y</text>
            <text x="331" y="664" class="axis-z">Z</text>
            <text x="359" y="668" class="axis-x">X</text>
            <text x="301" y="705" class="gtext">Gview:Not Saved</text>
            <text x="404" y="705" class="gtext">WCS:TOP</text>
            <text x="469" y="705" class="gtext">T/Cplane:TOP</text>
            <path d="M871 678v24M967 678v24M871 690h97" stroke="#60d0d0" stroke-width="1.500"/>
            <text x="914" y="683" class="gtext scale">34.85152</text>
            <text x="912" y="702" class="gtext unit">Metric</text>
        </svg>

        <aside class="side">
            <span class="sidegrip"></span>
            <button class="tool" aria-label="Recent function"><svg class="ico"><path d="M1 3h10L7 7h10v2H7v2h10v3H1z" fill="#c87820"/></svg></button>
            <button class="tool" aria-label="Clipboard"><svg class="ico"><path d="M3 3h12v14H3z" fill="#a8f0ff" stroke="#28a0b8" stroke-width="1.500"/><path d="M6 1h6v3H6z" fill="#eee" stroke="#777"/></svg></button>
        </aside>

        <section class="dialog">
            <div class="dtitle">
                <h2>Toolpath/surface selection</h2>
                <button class="close" aria-label="Close dialog"><svg viewBox="0 0 14 14"><path d="M2 2l10 10M12 2L2 12" stroke="#fff" stroke-width="2"/></svg></button>
            </div>
            <form class="dbody">
                <fieldset>
                    <legend>Drive</legend>
                    <div class="row"><span class="count">(3)</span><button type="button" aria-label="Select drive"><svg class="cur"><use href="#arrow"/></svg></button><button type="button" aria-label="Clear drive"><svg class="ico"><use href="#noarrow"/></svg></button></div>
                    <div class="row"><span class="count">(0)</span><button type="button">CAD file...</button><button type="button" aria-label="Clear CAD file"><svg class="ico"><use href="#noarrow"/></svg></button></div>
                    <div class="row"><span class="count"></span><button type="button" class="default">Show...</button></div>
                </fieldset>
                <fieldset>
                    <legend>Check</legend>
                    <div class="row"><span class="count">(0)</span><button type="button" aria-label="Select check"><svg class="cur"><use href="#arrow"/></svg></button><button type="button" aria-label="Clear check"><svg class="ico"><use href="#noarrow"/></svg></button></div>
                    <div class="row"><span class="count"></span><button type="button">Show...</button></div>
                </fieldset>
                <fieldset>
                    <legend>Containment</legend>
                    <div class="row"><span class="count">(0)</span><button type="button" aria-label="Select containment"><svg class="cur"><use href="#arrow"/></svg></button><button type="button" aria-label="Clear containment"><svg class="ico"><use href="#noarrow"/></svg></button></div>
                </fieldset>
                <fieldset>
                    <legend>Approximate starting point</legend>
                    <div class="row"><span class="count"></span><button type="button" aria-label="Select point"><svg class="cur"><use href="#arrow"/></svg></button><button type="button" aria-label="Clear point"><svg class="ico"><use href="#noarrow"/></svg></button></div>
                </fieldset>
                <div class="row actions"><span class="count"></span><button type="button" aria-label="OK"><svg class="ico"><use href="#tick"/></svg></button><button type="button" aria-label="Help"><svg class="ico"><use href="#ask"/></svg></button></div>
            </form>
        </section>

        <svg class="pointer" viewBox="0 0 12 20"><path d="M1 1v15l3.500-3 3 6 2-1-3-6H11z" fill="#fff" stroke="#000"/></svg>
    </main>

    <div class="status">
        <span class="msg">3 Total Surface(s)</span>
        <button class="cell w24">3D</button>
        <button class="cell w46">Gview</button>
        <button class="cell w38">Planes</button>
        <label class="cell flat" for="z">Z:</label>
        <span class="combo z"><select id="z"><option>0.0</option></select></span>
        <button class="color">10</button>
        <button class="drop" aria-label="Pick colour"></button>
        <label class="cell flat lvl" for="level">Level:</label>
        <span class="combo level"><select id="level"><option>1</option></select></span>
        <button class="cell attr">Attributes</button>
        <span class="combo pt"><select aria-label="Point style"><option>⚹</option></select></span>
        <span class="combo ln thick"><select aria-label="Line width"></select></span>
        <span class="combo ln"><select aria-label="Line style"></select></span>
        <button class="cell w41">WCS</button>
        <button class="cell w52">Groups</button>
        <button class="cell w12">!</button>
        <button class="cell w12">?</button>
    </div>

    <footer class="taskbar">
        <button class="start"><svg class="flag" viewBox="0 0 20 18"><path d="M3 3q4-3 7 0L9 9q-3-2-7 0z" fill="#e85020"/><path d="M11 3q3 2 7 0l-1 6q-4 2-7 0z" fill="#60c030"/><path d="M2 10q4-2 7 0l-1 6q-3-2-7 0z" fill="#3878e8"/><path d="M10 10q3 2 7 0l-1 6q-4 2-7 0z" fill="#f8c820"/></svg>开始</button>
        <div class="quick">
            <button aria-label="Show desktop"><svg class="ico" viewBox="0 0 18 18"><path d="M3 4h11l2 10-4 3H4z" fill="#f4e0c0" stroke="#6a4020"/><circle cx="9" cy="10" r="4" fill="#fff" stroke="#876"/><path d="M8 11l6-7" stroke="#806040" stroke-width="2"/></svg></button>
            <button aria-label="Messenger"><svg class="ico" viewBox="0 0 18 18"><circle cx="9" cy="8" r="7" fill="#58b0f0" stroke="#2868a8"/><path d="M4 4q5-4 10 0l-2 3H6z" fill="#d8f0ff"/><path d="M4 11h4v4H4zM11 11h4v3h-4z" fill="#102848"/></svg></button>
            <button aria-label="Browser"><svg class="ico" viewBox="0 0 18 18"><circle cx="9" cy="9" r="7" fill="#c07840" stroke="#f8e8d8" stroke-width="1.500"/><path d="M6 12V8q0-2 1.500-2T9 8v4M9 8q0-2 1.500-2T12 8v4" fill="none" stroke="#fff" stroke-width="1.500"/></svg></button>
            <button class="more">»</button>
        </div>
        <button class="task"><svg class="ico" viewBox="0 0 18 18"><path d="M1 1h16v16H1z" fill="#3868c8"/><path d="M3 4h12v10H3z" fill="#fff"/><circle cx="9" cy="9" r="3.500" fill="none" stroke="#3868c8" stroke-width="2"/><path d="M9 9V5a4 4 0 0 1 4 4z" fill="#80a8f0"/></svg>Microsoft PowerPoint ...</button>
        <button class="task"><svg class="ico" viewBox="0 0 18 18"><circle cx="9" cy="9" r="7.500" fill="#0a8a60" stroke="#c8f0e0"/><path d="M11 3q-6 6 0 12 4-6 0-12z" fill="#a8ffe0"/></svg>Camtasia Studio - Unt...</button>
        <button class="task on"><svg class="ico"><use href="#logo"/></svg>Mastercam Mill SP1</button>
        <svg class="kbd" viewBox="0 0 16 14"><path d="M1 6h13v7H1z" fill="#fff" stroke="#222"/><path d="M3 8h10M3 10h10" stroke="#222" stroke-dasharray="1 1"/><path d="M5 5q-3-3 0-3 2 2 4 0" fill="none" stroke="#222"/></svg>
        <div class="tray">
            <svg class="ico" viewBox="0 0 18 18"><circle cx="9" cy="9" r="7.500" fill="#f4dcc8" stroke="#c08868"/><path d="M11 5L7 9l4 4" fill="none" stroke="#90482a" stroke-width="2"/></svg>
            <svg class="ico" viewBox="0 0 18 18"><circle cx="9" cy="9" r="7.500" fill="#109820" stroke="#085010"/><path d="M11 3q-6 6 0 12 4-6 0-12z" fill="#a0ff90"/></svg>
            <svg class="ico" viewBox="0 0 18 18"><circle cx="9" cy="8" r="6.500" fill="#888" stroke="#444"/><circle cx="8" cy="7" r="3" fill="#ddd" stroke="#444"/></svg>
            <svg class="ico" viewBox="0 0 18 18"><path d="M10 8h7v8h-7z" fill="#eef" stroke="#554"/><circle cx="8" cy="4" r="3" fill="#2848c0"/><path d="M4 11l2-5h5l3 6z" fill="#2848c0"/><path d="M1 16l5-5 4 5z" fill="#fff" stroke="#445"/></svg>
            <time>0:31</time>
        </div>
    </footer>
</body>
</html>
```

FILE: styles.css
```css
* {
    box-sizing: border-box;
}

body {
    margin: 0;
    height: 100vh;
    display: flex;
    flex-direction: column;
    overflow: hidden;
    background: #ece8e9;
    color: #000;
    font-family: "Liberation Sans", Arial, sans-serif;
    font-size: 11px;
    line-height: 14px;
}

button,
select {
    font: inherit;
    color: inherit;
    margin: 0;
    padding: 0;
    border: 0;
    background: none;
}

h1,
h2 {
    margin: 0;
}

svg {
    display: block;
}

.sprite {
    position: absolute;
    width: 0;
    height: 0;
}

.ico {
    width: 18px;
    height: 18px;
    flex: none;
}

.ico.big {
    width: 20px;
    height: 20px;
}

/* Title bar */
.titlebar {
    height: 26px;
    flex: none;
    display: flex;
    align-items: center;
    gap: 3px;
    padding: 0 4px 0 0;
    background: linear-gradient(#a05a3c 0, #eab088 1px, #bc7048 3px, #c47c50 10px, #e4ac74 21px, #eebc88 26px);
}

.titlebar h1 {
    flex: 1;
    font-size: 13px;
    color: #fff;
    text-shadow: 1px 1px #8a5030;
}

.winbtn {
    width: 20px;
    height: 20px;
    border: 1px solid #f4d4b8;
    border-radius: 3px;
    background: linear-gradient(#d89468, #b86838);
    display: grid;
    place-items: center;
}

.winbtn svg {
    width: 14px;
    height: 14px;
}

/* Menu */
.menu {
    height: 20px;
    flex: none;
    display: flex;
    align-items: center;
    gap: 11px;
    padding: 0 0 2px 4px;
}

.menu a {
    color: #a09a9c;
    text-decoration: none;
}

/* Toolbars */
.bars {
    height: 30px;
    flex: none;
    display: flex;
    border-top: 1px solid #aaa6a8;
}

.toolbar {
    display: flex;
    align-items: center;
    padding-right: 1px;
    border-top: 1px solid #fff;
    border-right: 1px solid #aaa6a8;
}

.toolbar::before {
    content: "";
    width: 3px;
    height: 22px;
    margin: 0 5px 0 3px;
    border-left: 1px solid #fff;
    border-right: 1px solid #aaa6a8;
    border-bottom: 1px solid #aaa6a8;
}

.toolbar:first-child::before {
    margin-left: 2px;
    margin-right: 4px;
}

.toolbar.spaced {
    margin-left: 12px;
    border-left: 1px solid #aaa6a8;
}

.tool {
    width: 23px;
    height: 24px;
    flex: none;
    display: grid;
    place-items: center start;
    padding-left: 2px;
}

.drop {
    width: 13px;
    height: 20px;
    flex: none;
    display: grid;
    place-items: center;
}

.drop::after {
    content: "";
    border: 3px solid transparent;
    border-top-color: #000;
    border-bottom: 0;
}

.drop:disabled::after {
    border-top-color: #aaa6a8;
}

.sep {
    width: 1px;
    height: 18px;
    margin: 0 4px 0 3px;
    background: #aaa6a8;
}

.axis,
.filter {
    height: 22px;
    border: 1px solid;
    border-color: #fff #999 #999 #fff;
    box-shadow: 1px 1px #aaa6a8;
    color: #a8a2a4;
    text-shadow: 1px 1px #fff;
}

.axis {
    width: 21px;
    margin-right: 5px;
}

.coords::before {
    display: none;
}

.coords {
    padding-left: 5px;
    padding-right: 6px;
}

.coords .combo {
    width: 70px;
    margin-right: 15px;
}

.coords .combo + .tool {
    margin-left: -7px;
}

.coords .help {
    margin-left: 4px;
}

.filter {
    width: 46px;
    margin: 0 0 0 2px;
}

.filter + .filter {
    margin: 0 9px;
}

.select {
    flex: 1;
    border-right: 0;
}

.select .combo {
    width: 70px;
    margin-right: 10px;
}

/* Drop-down with its arrow button laid over the right end */
.combo {
    display: grid;
    flex: none;
    height: 20px;
    background: #fff;
    border: 1px solid;
    border-color: #888 #fff #fff #888;
}

.combo select,
.combo::after {
    grid-area: 1 / 1;
}

.combo select {
    appearance: none;
    width: 100%;
    padding-left: 1px;
    opacity: 1;
}

.combo::after {
    content: "";
    justify-self: end;
    width: 16px;
    pointer-events: none;
    border: 1px solid;
    border-color: #fff #999 #999 #fff;
    background: linear-gradient(to bottom left, #000 50%, transparent 50%) 3px 7px / 4px 4px no-repeat, linear-gradient(to bottom right, #000 50%, transparent 50%) 7px 7px / 4px 4px no-repeat, #ece8e9;
}

.combo.off {
    background: #ece8e9;
    border: 2px solid #aaa6a8;
    color: #a09a9c;
}

.combo.off select {
    padding-left: 0;
}

.combo.off::after {
    width: 15px;
    background: linear-gradient(to bottom left, #999 50%, transparent 50%) 3px 5px / 4px 4px no-repeat, linear-gradient(to bottom right, #999 50%, transparent 50%) 7px 5px / 4px 4px no-repeat, #ece8e9;
}

.ribbon {
    height: 33px;
    flex: none;
    padding: 9px 0 0 186px;
    border-top: 1px solid #999;
    border-bottom: 1px solid #999;
    box-shadow: inset 0 1px #fff;
}

/* Work area */
.work {
    flex: 1;
    min-height: 0;
    display: flex;
    position: relative;
}

.panel {
    width: 294px;
    flex: none;
    display: flex;
    flex-direction: column;
    padding: 0 12px 9px 5px;
    border-top: 1px solid #000;
    border-left: 1px solid #000;
    border-right: 1px solid #000;
    box-shadow: inset -5px 0 #ece8e9, inset -6px -3px #aaa6a8;
}

.tabs {
    height: 23px;
    display: flex;
    border-bottom: 1px solid #fff;
}

.tab {
    width: 58px;
    padding-right: 4px;
    border-right: 1px solid #777;
    text-align: center;
}

.ptools {
    height: 30px;
    display: flex;
    align-items: center;
    padding-left: 3px;
    border-bottom: 1px solid #aaa6a8;
}

.ptools .sep {
    height: 20px;
}

.treebox {
    flex: 1;
    min-height: 0;
    display: flex;
    flex-direction: column;
    background: #fff;
    border: 1px solid #888;
    border-right-color: #ccc;
    border-bottom-color: #ddd;
}

.tree {
    flex: 1;
    list-style: none;
    margin: 0;
    padding: 0 0 0 4px;
    overflow: hidden;
}

.tree li {
    height: 16px;
    display: flex;
    align-items: center;
    gap: 5px;
}

.tree .l1 {
    padding-left: 19px;
}

.tree .l2 {
    padding-left: 38px;
}

.tree .stem {
    height: 72px;
    margin-left: 42px;
    padding-left: 10px;
    width: 12px;
    border-left: 1px dotted #888;
    border-bottom: 1px dotted #888;
    align-items: end;
}

.stem .ico {
    margin-bottom: -8px;
}

.node {
    width: 9px;
    height: 9px;
    border: 1px solid #888;
    font-size: 10px;
    line-height: 7px;
    text-align: center;
}

.hscroll {
    height: 16px;
    display: flex;
    background: #fdf4ec;
}

.hscroll button,
.thumb {
    border: 1px solid #b89880;
    border-radius: 2px;
    background: linear-gradient(#fff, #f4dcc8);
}

.hscroll button {
    width: 17px;
    display: grid;
    place-items: center;
}

.hscroll svg {
    width: 10px;
    height: 10px;
}

.thumb {
    flex: none;
    width: 64%;
    margin-right: auto;
    background: repeating-linear-gradient(90deg, #a08878 0 1px, transparent 1px 2px) center / 8px 6px no-repeat, linear-gradient(#fff, #f4dcc8);
}

.view {
    flex: 1;
    min-width: 0;
    height: 100%;
    border-top: 1px solid #000;
}

.gtext {
    font-size: 12px;
    font-weight: bold;
    fill: #e4c8c0;
}

.scale {
    fill: #20e820;
    text-anchor: middle;
}

.unit {
    text-anchor: middle;
}

.axis-x,
.axis-y {
    font-size: 11px;
    font-weight: bold;
    fill: #0a0aa0;
}

.axis-y {
    fill: #286818;
}

.axis-z {
    font-size: 11px;
    fill: #f01818;
}

.side {
    width: 32px;
    flex: none;
    display: flex;
    flex-direction: column;
    align-items: center;
    border-top: 1px solid #999;
    border-left: 2px solid #fff;
}

.sidegrip {
    width: 22px;
    height: 3px;
    margin: 7px 0 2px;
    border-top: 1px solid #fff;
    border-bottom: 1px solid #999;
}

/* Dialog */
.dialog {
    position: absolute;
    left: 68px;
    top: 0;
    width: 226px;
    background: #ece8e9;
    border: 3px solid #c8703c;
    border-top: 0;
    border-radius: 6px 6px 0 0;
}

.dtitle {
    height: 28px;
    margin: 0 -3px;
    padding: 0 5px 0 8px;
    display: flex;
    align-items: center;
    border-radius: 6px 6px 0 0;
    background: linear-gradient(#a8502c, #e09868 2px, #c4683a 6px, #cc7038 16px, #dc843c 24px, #b05a28);
}

.dtitle h2 {
    flex: 1;
    font-size: 13px;
    color: #fff;
    text-shadow: 1px 1px #7a3c18;
    white-space: nowrap;
}

.close {
    width: 19px;
    height: 19px;
    border: 1px solid #e8e8ff;
    border-radius: 3px;
    background: linear-gradient(135deg, #7088e8, #2848c8);
    display: grid;
    place-items: center;
}

.close svg {
    width: 13px;
    height: 13px;
}

.dbody {
    padding: 10px 9px 15px 8px;
}

fieldset {
    margin: 0 0 8px;
    padding: 4px 12px 6px 0;
    border: 1px solid #a8a4a6;
    box-shadow: 1px 1px #fff, inset 1px 1px #fff;
}

legend {
    height: 14px;
    margin-left: 6px;
    padding: 0 2px;
}

.row {
    display: flex;
    gap: 7px;
    height: 24px;
    margin-bottom: 8px;
}

fieldset .row:last-child {
    margin-bottom: 0;
}

.row .count {
    width: 67px;
    text-align: right;
    line-height: 24px;
}

.row button {
    width: 53px;
    display: grid;
    place-items: center;
    border: 1px solid;
    border-color: #fff #8c888a #8c888a #fff;
    box-shadow: inset -1px -1px #bcb8ba;
}

.row .default {
    border-color: #000;
    box-shadow: inset -2px -2px #a09c9e, inset 1px 1px #fff;
}

.actions {
    margin: 18px 0 0 1px;
}

.cur {
    width: 12px;
    height: 18px;
}

.pointer {
    position: absolute;
    left: 131px;
    top: 188px;
    width: 13px;
    height: 22px;
}

/* Status bar */
.status {
    height: 25px;
    flex: none;
    display: flex;
    align-items: center;
    gap: 3px;
    padding-top: 2px;
    border-top: 1px solid #fff;
}

.msg {
    flex: 1;
}

.cell {
    height: 20px;
    line-height: 18px;
    border: 1px solid;
    border-color: #999 #fff #fff #999;
    text-align: center;
    white-space: nowrap;
}

.flat {
    border-color: transparent transparent transparent #999;
    padding: 0 0 0 2px;
}

.w12 {
    width: 13px;
}

.w24 {
    width: 24px;
}

.w38 {
    width: 38px;
}

.w41 {
    width: 41px;
}

.w46 {
    width: 46px;
}

.w52 {
    width: 52px;
}

.attr {
    width: 58px;
}

.lvl {
    width: 37px;
}

.combo.z {
    width: 77px;
}

.combo.level {
    width: 86px;
    margin-right: 3px;
}

.combo.pt {
    width: 32px;
    margin-right: 3px;
}

.combo.ln {
    width: 66px;
    margin-right: 2px;
    background: linear-gradient(#000, #000) 3px 10px / 43px 1px no-repeat, #fff;
}

.combo.thick {
    width: 61px;
    background: linear-gradient(#000, #000) 3px 9px / 39px 3px no-repeat, #fff;
}

.color {
    width: 32px;
    height: 18px;
    margin-left: 3px;
    background: #00f000;
}

.status .drop::after {
    border-width: 5px 4px 0;
}

/* Taskbar */
.taskbar {
    height: 29px;
    flex: none;
    display: flex;
    align-items: center;
    gap: 3px;
    color: #fff;
    background: linear-gradient(#a04c20, #e8a070 2px, #d08450 6px, #cc7c48 20px, #b86838);
}

.start {
    width: 99px;
    height: 29px;
    display: flex;
    align-items: center;
    gap: 5px;
    padding-left: 8px;
    border-radius: 0 10px 10px 0;
    background: linear-gradient(#6cc068, #2c9430 5px, #309c34 20px, #207020);
    font-family: "Liberation Sans", "Noto Sans CJK SC", sans-serif;
    font-size: 20px;
    font-style: italic;
    line-height: 24px;
    text-shadow: 1px 1px #145014;
}

.flag {
    width: 20px;
    height: 18px;
}

.quick {
    width: 98px;
    display: flex;
    align-items: center;
    gap: 5px;
    padding-left: 6px;
}

.more {
    height: 20px;
    padding-left: 4px;
    font-size: 14px;
    font-weight: bold;
    line-height: 10px;
}

.task {
    width: 157px;
    height: 24px;
    display: flex;
    align-items: center;
    gap: 3px;
    padding-left: 8px;
    border: 1px solid #c47c4c;
    border-radius: 2px;
    background: linear-gradient(#e0a070, #d08450 5px, #c87844);
    white-space: nowrap;
}

.task.on {
    background: linear-gradient(#6a3418, #8a4a24 5px, #945028);
    border-color: #5c2c10;
}

.kbd {
    width: 16px;
    height: 14px;
    margin-left: auto;
}

.tray {
    height: 29px;
    display: flex;
    align-items: center;
    gap: 1px;
    margin-left: 2px;
    padding: 0 17px 0 0;
    color: #000;
    background: linear-gradient(#e8b890, #fff4ea 4px, #fbe6d4 18px, #e8c4a4);
}

.tray time {
    margin-left: 7px;
}
```
